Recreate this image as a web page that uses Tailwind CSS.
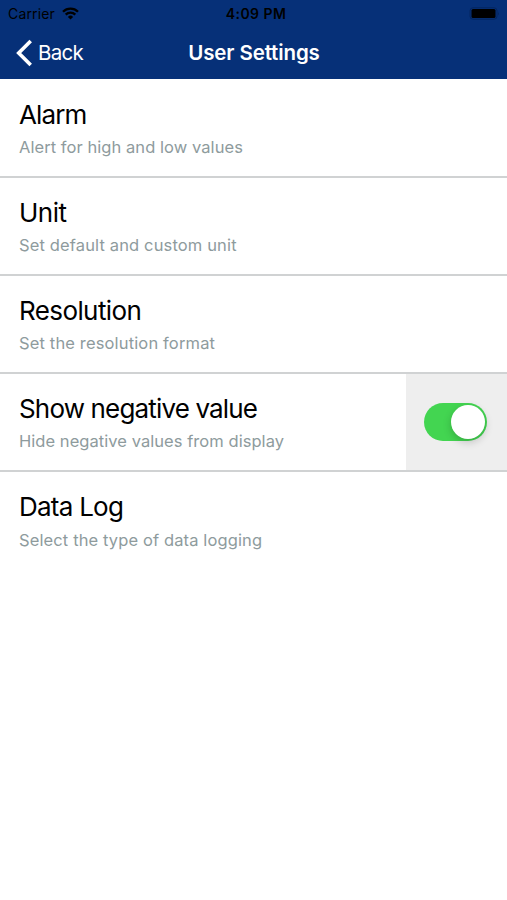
<!DOCTYPE html>
<html lang="en">
<head>
<meta charset="utf-8">
<meta name="viewport" content="width=device-width, initial-scale=1">
<title>User Settings</title>
<script src="https://cdn.jsdelivr.net/npm/@tailwindcss/browser@4"></script>
</head>
<body class="h-[900px] overflow-hidden bg-white font-['Inter','Liberation_Sans',sans-serif] text-black">
<header class="h-[79px] bg-[#063078]">
  <div class="grid h-[27px] grid-cols-3 items-center pl-2 pr-[7px] text-[14px] leading-[27px]">
    <div class="flex items-center gap-[7px]"><span class="tracking-[0.15px]">Carrier</span>
      <svg class="h-[13px] w-[17px]" viewBox="0 0 17 13" fill="none" stroke="black" stroke-width="2.3"><path d="M1 4.8a10.6 10.6 0 0 1 15 0M3.7 7.6a6.8 6.8 0 0 1 9.6 0"/><path d="M8.5 12.5 5.9 9.9a3.7 3.7 0 0 1 5.2 0z" fill="black" stroke="none"/></svg>
    </div>
    <div class="pl-1 text-center text-[14px] font-semibold tracking-[0.45px]">4:09 PM</div>
    <svg class="h-[13px] w-[32px] justify-self-end" viewBox="0 0 32 13"><rect x="2" y=".8" width="27" height="11.4" rx="3" fill="none" stroke="#04255e" stroke-width="1"/><rect x="3.5" y="2" width="24" height="9" rx="1.5"/><path d="M30 4.5q1.5 2 0 4z" fill="#04255e"/></svg>
  </div>
  <div class="grid h-[52px] grid-cols-[1fr_auto_1fr] items-center text-white">
    <div class="flex items-center gap-[5px] pl-4">
      <svg class="h-[28px] w-[17px]" viewBox="0 0 17 28" fill="none" stroke="white" stroke-width="3.6"><path d="M14.7 2 2.7 14l12 12"/></svg>
      <span class="text-[20.5px] leading-7 tracking-[-0.7px]">Back</span>
    </div>
    <h1 class="pl-px text-[20.5px] font-semibold leading-7 tracking-[-0.12px]">User Settings</h1>
    <div></div>
  </div>
</header>
<main>
  <section class="h-[99px] border-b-2 border-[#d0d2d3] pl-[19px] pt-5">
    <h2 class="text-[26px] leading-8"><span class="tracking-[-0.9px]">Alarm</span></h2>
    <p class="mt-1 text-[16.5px] leading-6 text-[#8e9b9d]"><span class="tracking-[0.06px]">Alert for high and low values</span></p>
  </section>
  <section class="h-[98px] border-b-2 border-[#d0d2d3] pl-[19px] pt-[19px]">
    <h2 class="text-[26px] leading-8"><span class="tracking-[-0.5px]">Unit</span></h2>
    <p class="mt-1 text-[16.5px] leading-6 text-[#8e9b9d]"><span class="tracking-[0.14px]">Set default and custom unit</span></p>
  </section>
  <section class="h-[98px] border-b-2 border-[#d0d2d3] pl-[19px] pt-[19px]">
    <h2 class="text-[26px] leading-8"><span class="tracking-[-0.6px]">Resolution</span></h2>
    <p class="mt-1 text-[16.5px] leading-6 text-[#8e9b9d]"><span class="tracking-[0.15px]">Set the resolution format</span></p>
  </section>
  <section class="flex h-[98px] justify-between border-b-2 border-[#d0d2d3] pl-[19px]">
    <div class="pt-[19px]">
      <h2 class="text-[26px] leading-8"><span class="tracking-[-0.84px]">Show negative value</span></h2>
      <p class="mt-1 text-[16.5px] leading-6 text-[#8e9b9d]"><span class="tracking-[0.05px]">Hide negative values from display</span></p>
    </div>
    <div class="flex w-[101px] items-center bg-[#eeeeee] pl-[18px]">
      <div class="flex h-[38px] w-[63px] items-center justify-end rounded-full bg-[#43d551] pr-[2px]"><div class="size-[34px] rounded-full bg-white shadow-[0_3px_8px_rgba(0,0,0,0.2)]"></div></div>
    </div>
  </section>
  <section class="h-[98px] pl-[19px] pt-[19px]">
    <h2 class="text-[26px] leading-8"><span class="tracking-[-0.75px]">Data Log</span></h2>
    <p class="mt-[5px] text-[16.5px] leading-6 text-[#8e9b9d]"><span class="tracking-[0.12px]">Select the type of data logging</span></p>
  </section>
</main>
</body>
</html>
